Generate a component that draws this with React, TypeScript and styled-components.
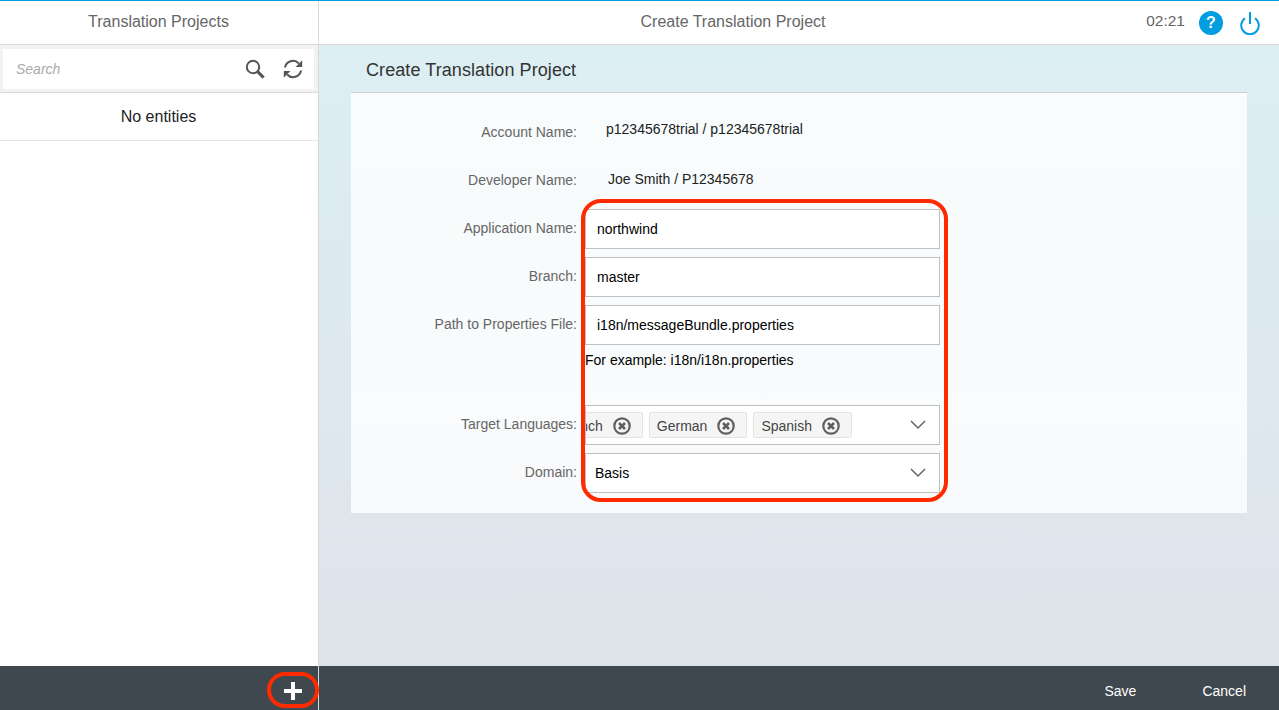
import React from "react"
import styled, { createGlobalStyle } from "styled-components"

const GlobalStyle = createGlobalStyle`
  html, body {
    margin: 0;
    height: 100%;
    overflow: hidden;
    font-family: "Liberation Sans", Arial, sans-serif;
  }
  * { box-sizing: border-box; }
`

const Shell = styled.div`
  position: relative;
  display: grid;
  grid-template-columns: 319px 1fr;
  height: 710px;
  border-top: 1px solid #009de0;
`

const Column = styled.div`
  display: flex;
  flex-direction: column;
  min-height: 0;
`

const Sidebar = styled(Column)`
  border-right: 1px solid #d5d9dc;
`

const Header = styled.header<{ $inset: number }>`
  position: relative;
  display: flex;
  align-items: center;
  justify-content: center;
  height: 44px;
  flex: none;
  padding: 0 ${(p) => p.$inset}px 2px 0;
  background: #fff;
  border-bottom: 1px solid #d8d8d8;
  color: #666;
  font-size: 16px;
`

const HeaderTools = styled.div`
  position: absolute;
  right: 19px;
  top: 0;
  bottom: 0;
  display: flex;
  align-items: center;
  color: #666;
  font-size: 15.5px;
`

const Clock = styled.span`
  margin-right: 14px;
  padding-bottom: 4px;
`

const HelpBadge = styled.span`
  display: flex;
  align-items: center;
  justify-content: center;
  width: 24px;
  height: 24px;
  margin-right: 17px;
  border-radius: 50%;
  background: #009de0;
  color: #fff;
  font-size: 16px;
  font-weight: bold;
`

const SearchBar = styled.div`
  flex: none;
  height: 48px;
  padding: 4px 4px 3px 3px;
  background: #f2f2f2;
  border-bottom: 1px solid #dcdcdc;
`

const SearchField = styled.div`
  display: flex;
  align-items: center;
  height: 40px;
  padding: 0 11px 0 13px;
  background: #fff;
  color: #aaa;
  font-size: 14px;
  font-style: italic;
`

const SearchHint = styled.span`
  flex: 1;
`

const SearchIcons = styled.div`
  display: flex;
  align-items: center;
  gap: 18px;
`

const EmptyRow = styled.div`
  display: flex;
  align-items: center;
  justify-content: center;
  flex: none;
  height: 48px;
  padding-right: 1px;
  border-bottom: 1px solid #e4e4e4;
  color: #222;
  font-size: 16px;
`

const SidebarBody = styled.div`
  flex: 1;
  background: #fff;
`

const Footer = styled.footer<{ $end?: boolean }>`
  display: flex;
  align-items: center;
  justify-content: flex-end;
  flex: none;
  height: 44px;
  padding-right: ${(p) => (p.$end ? "33px" : "15px")};
  gap: 66px;
  background: #3f484e;
  color: #fff;
  font-size: 14px;
`

const FooterAction = styled.span`
  padding-top: 5px;
`

const AddButton = styled.span`
  position: relative;
  display: flex;
  padding-top: 5px;
`

const AddHighlight = styled.span`
  position: absolute;
  left: -16px;
  top: -4px;
  width: 52px;
  height: 36px;
  border: 4px solid #ff2a00;
  border-radius: 18px;
`

const Main = styled.main`
  flex: 1;
  padding: 0 32px;
  background: linear-gradient(#dceff3, #dfe3ea);
`

const PageTitle = styled.h1`
  display: flex;
  align-items: center;
  height: 47px;
  margin: 0;
  padding: 3px 0 0 15px;
  color: #333;
  font-size: 18px;
  font-weight: normal;
  letter-spacing: 0.08px;
`

const Panel = styled.section`
  position: relative;
  display: grid;
  grid-template-columns: 226px 355px;
  grid-auto-rows: minmax(48px, auto);
  column-gap: 8px;
  padding: 15px 0 17px;
  border-top: 1px solid #cfcfcf;
  background: rgba(255, 255, 255, 0.8);
`

const Label = styled.label`
  align-self: center;
  color: #666;
  font-size: 14px;
  text-align: right;
`

const StaticValue = styled.div<{ $indent: number; $lift: number }>`
  align-self: center;
  padding-left: ${(p) => p.$indent}px;
  padding-bottom: ${(p) => p.$lift}px;
  color: #222;
  font-size: 14px;
`

const TextField = styled.input`
  align-self: center;
  width: 100%;
  height: 40px;
  margin-top: 2px;
  padding: 0 11px;
  border: 1px solid #bfbfbf;
  border-radius: 0;
  outline: none;
  background: #fff;
  color: #000;
  font-family: inherit;
  font-size: 14px;
`

const Hint = styled.div`
  grid-column: 2;
  height: 52px;
  padding-top: 3px;
  color: #000;
  font-size: 14px;
  line-height: 18px;
`

const SelectBox = styled.div`
  align-self: center;
  display: flex;
  align-items: center;
  height: 40px;
  margin-top: 2px;
  border: 1px solid #bfbfbf;
  background: #fff;
`

const TagStrip = styled.div`
  display: flex;
  flex: none;
  justify-content: flex-end;
  gap: 6px;
  width: 266px;
  overflow: hidden;
`

const Tag = styled.span`
  display: flex;
  align-items: center;
  flex: none;
  gap: 10px;
  height: 26px;
  padding: 2px 11px 0 7px;
  border: 1px solid #e3e3e3;
  border-radius: 2px;
  background: #f5f5f5;
  color: #444;
  font-size: 14px;
`

const SelectValue = styled.span`
  flex: 1;
  padding-left: 9px;
  color: #000;
  font-size: 14px;
`

const Chevron = styled.span`
  display: flex;
  margin-left: auto;
  margin-right: 13px;
`

const FormHighlight = styled.div`
  position: absolute;
  left: 230px;
  top: 106px;
  width: 367px;
  height: 303px;
  border: 4px solid #ff2a00;
  border-radius: 20px;
  pointer-events: none;
`

const SearchIcon = () => (
  <svg width="20" height="20" viewBox="0 0 20 20" fill="none" stroke="#555" strokeWidth="2">
    <circle cx="8" cy="8" r="6.2" />
    <path d="M12.6 12.6 18.6 18.6" strokeWidth="3" />
  </svg>
)

const RefreshIcon = () => (
  <svg width="20" height="20" viewBox="0 0 20 20" fill="none" stroke="#555" strokeWidth="2">
    <path d="M2 8.5A8 8 0 0 1 15.8 4.5" />
    <path d="M18 11.5A8 8 0 0 1 4.2 15.5" />
    <path d="M19.2 1.2V8H12.6Z" fill="#555" stroke="none" />
    <path d="M.8 18.8V12H7.4Z" fill="#555" stroke="none" />
  </svg>
)

const PowerIcon = () => (
  <svg width="20" height="24" viewBox="0 0 20 24" fill="none" stroke="#009de0" strokeWidth="2">
    <path d="M10 1V13" />
    <path d="M5 7.2A8.8 8.8 0 1 0 15 7.2" />
  </svg>
)

const RemoveIcon = () => (
  <svg width="18" height="18" viewBox="0 0 18 18" fill="none" stroke="#5f5f5f">
    <circle cx="9" cy="9" r="7.7" strokeWidth="2.2" />
    <path d="M6 6 12 12M12 6 6 12" strokeWidth="2.6" />
  </svg>
)

const ChevronIcon = () => (
  <svg width="16" height="10" viewBox="0 0 16 10" fill="none" stroke="#666" strokeWidth="1.5">
    <path d="M1 1 8 8 15 1" />
  </svg>
)

const PlusIcon = () => (
  <svg width="20" height="20" viewBox="0 0 20 20" fill="#fff">
    <path d="M8 1H12V8H19V12H12V19H8V12H1V8H8Z" />
  </svg>
)

const languages = ["French", "German", "Spanish"]

const App = () => {
  return <Shell>
    <GlobalStyle />

    <Sidebar>
      <Header $inset={1}>Translation Projects</Header>
      <SearchBar>
        <SearchField>
          <SearchHint>Search</SearchHint>
          <SearchIcons>
            <SearchIcon />
            <RefreshIcon />
          </SearchIcons>
        </SearchField>
      </SearchBar>
      <EmptyRow>No entities</EmptyRow>
      <SidebarBody />
      <Footer>
        <AddButton>
          <PlusIcon />
          <AddHighlight />
        </AddButton>
      </Footer>
    </Sidebar>

    <Column>
      <Header $inset={132}>
        Create Translation Project
        <HeaderTools>
          <Clock>02:21</Clock>
          <HelpBadge>?</HelpBadge>
          <PowerIcon />
        </HeaderTools>
      </Header>
      <Main>
        <PageTitle>Create Translation Project</PageTitle>
        <Panel>
          <Label>Account Name:</Label>
          <StaticValue $indent={21} $lift={6}>p12345678trial / p12345678trial</StaticValue>

          <Label>Developer Name:</Label>
          <StaticValue $indent={23} $lift={2}>Joe Smith / P12345678</StaticValue>

          <Label>Application Name:</Label>
          <TextField readOnly value="northwind" />

          <Label>Branch:</Label>
          <TextField readOnly value="master" />

          <Label>Path to Properties File:</Label>
          <TextField readOnly value="i18n/messageBundle.properties" />

          <Hint>For example: i18n/i18n.properties</Hint>

          <Label>Target Languages:</Label>
          <SelectBox>
            <TagStrip>
              {languages.map((name) => (
                <Tag key={name}>
                  {name}
                  <RemoveIcon />
                </Tag>
              ))}
            </TagStrip>
            <Chevron><ChevronIcon /></Chevron>
          </SelectBox>

          <Label>Domain:</Label>
          <SelectBox>
            <SelectValue>Basis</SelectValue>
            <Chevron><ChevronIcon /></Chevron>
          </SelectBox>

          <FormHighlight />
        </Panel>
      </Main>
      <Footer $end>
        <FooterAction>Save</FooterAction>
        <FooterAction>Cancel</FooterAction>
      </Footer>
    </Column>
  </Shell>
}

export default App
